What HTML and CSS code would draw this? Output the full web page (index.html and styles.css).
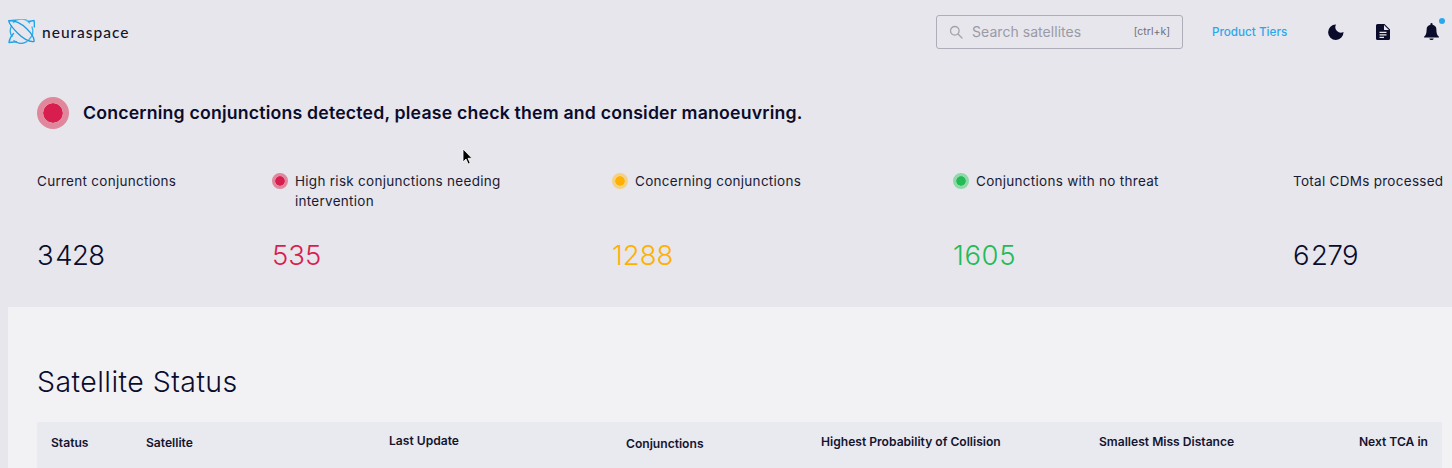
FILE: index.html
```html
<!DOCTYPE html>
<html lang="en">
<head>
<meta charset="utf-8">
<title>Neuraspace</title>
<link rel="stylesheet" href="styles.css">
</head>
<body>
<header class="topbar">
  <div class="brand">
    <svg class="logo" viewBox="0 0 27 25" fill="none" stroke-linecap="round" stroke-linejoin="round">
      <path d="M5.500 3.500A10.500 10.500 0 0 1 21.500 3.800" stroke="#4cc3f5" stroke-width="1.600"/>
      <path d="M24 8A10.500 10.500 0 0 1 21 20.500" stroke="#35b5f0" stroke-width="1.300"/>
      <path d="M3.500 7A10.500 10.500 0 0 0 4 17.500M6 21.800A10.500 10.500 0 0 0 19 22.500" stroke="#2aa5e8" stroke-width="1.300"/>
      <path d="M.8 1.800C6 .8 13.500 4.500 19 10c4.500 4.500 7.500 9.500 7 12.500-4.500.5-11-3-16.500-8.500C5 9.500 1 5 .8 1.800Z" stroke="#1f9be0" stroke-width="1.300"/>
      <path d="M.8 1.800 7.500 1.200M26 1.500c.5 2 .5 4 .3 6.500M26 1.500l-5.500 1M1 23.500c.5-3.500 2-6.500 4.500-9M1 23.500l7.500-.8" stroke="#22a4e8" stroke-width="1.400"/>
    </svg>
    <span class="brand-name">neuraspace</span>
  </div>
  <div class="search">
    <svg class="search-icon" viewBox="0 0 14 14" fill="none" stroke="#a3a3ad" stroke-width="1.300"><circle cx="5.800" cy="5.800" r="4.300"/><path d="m9 9 4 4" stroke-linecap="round"/></svg>
    <span class="search-text">Search satellites</span>
    <span class="search-key">[ctrl+k]</span>
  </div>
  <a class="tiers">Product Tiers</a>
  <svg class="tool tool-moon" viewBox="0 0 16 16"><path d="M8 .6A7.700 7.700 0 1 0 15.500 8 5.500 5.500 0 0 1 8 .6Z" fill="#0b0b2b"/></svg>
  <svg class="tool tool-doc" viewBox="0 0 14 16"><path d="M1.500 0H8.500L14 5.500V14.500A1.500 1.500 0 0 1 12.500 16H1.500A1.500 1.500 0 0 1 0 14.500V1.500A1.500 1.500 0 0 1 1.500 0ZM8 1V6H13ZM3.500 7.800V9H10.500V7.800ZM3.500 10.300V11.500H10.500V10.300ZM3.500 12.800V14H8V12.800Z" fill="#0b0b2b" fill-rule="evenodd"/></svg>
  <div class="bell">
    <svg class="tool tool-bell" viewBox="0 0 14 16"><path d="M7 0a1 1 0 0 1 1 1v.7A4.600 4.600 0 0 1 11.600 6.300c0 3.200.6 5 2.400 6.700v.7H0V13c1.800-1.700 2.400-3.500 2.400-6.700A4.600 4.600 0 0 1 6 1.700V1a1 1 0 0 1 1-1ZM5 14.500h4a2 1.500 0 0 1-4 0Z" fill="#0b0b2b"/></svg>
    <span class="bell-dot"></span>
  </div>
</header>

<section class="alert">
  <span class="dot dot-lg dot-red"></span>
  <h1 class="alert-text">Concerning conjunctions detected, please check them and consider manoeuvring.</h1>
</section>

<section class="stats">
  <div class="stat">
    <div class="stat-label">Current conjunctions</div>
    <div class="stat-value val-thousands">3&#8202;428</div>
  </div>
  <div class="stat">
    <div class="stat-label"><span class="dot dot-sm dot-red"></span><span>High risk conjunctions needing intervention</span></div>
    <div class="stat-value val-red">535</div>
  </div>
  <div class="stat">
    <div class="stat-label"><span class="dot dot-sm dot-amber"></span><span>Concerning conjunctions</span></div>
    <div class="stat-value val-amber">1288</div>
  </div>
  <div class="stat">
    <div class="stat-label"><span class="dot dot-sm dot-green"></span><span>Conjunctions with no threat</span></div>
    <div class="stat-value val-green">1605</div>
  </div>
  <div class="stat">
    <div class="stat-label">Total CDMs processed</div>
    <div class="stat-value val-thousands">6&#8202;279</div>
  </div>
</section>

<main class="panel">
  <h2 class="panel-title">Satellite Status</h2>
  <div class="table-head">
    <span class="th th-status">Status</span>
    <span class="th th-sat">Satellite</span>
    <span class="th th-update">Last Update</span>
    <span class="th th-conj">Conjunctions</span>
    <span class="th th-prob">Highest Probability of Collision</span>
    <span class="th th-miss">Smallest Miss Distance</span>
    <span class="th th-next">Next TCA in</span>
  </div>
</main>

<svg class="cursor" viewBox="0 0 11 17"><path d="M1 1v13l3-3 2.200 5 2-.9L6 10.300h4Z" fill="#000" stroke="#fff" stroke-width=".8"/></svg>
</body>
</html>
```
FILE: styles.css
```css
* { box-sizing: border-box; }
html, body { margin: 0; height: 468px; overflow: hidden; }
body {
  background: #e6e6ec;
  color: #0b0b2b;
  font-family: "Inter", "Liberation Sans", sans-serif;
  position: relative;
}
.topbar {
  display: flex;
  align-items: center;
  height: 63px;
  padding-left: 8px;
}
.brand { display: flex; align-items: center; gap: 7px; margin-right: auto; }
.logo { width: 27px; height: 25px; }
.brand-name { font: 500 15.500px "Lato", sans-serif; letter-spacing: 1px; color: #14142f; }
.search {
  display: flex;
  align-items: center;
  width: 247px;
  height: 34px;
  padding: 0 12px;
  border: 1px solid #aeaeb8;
  border-radius: 3px;
}
.search-icon { width: 14px; height: 14px; margin-right: 9px; }
.search-text { flex: 1; font-size: 14px; letter-spacing: .05px; color: #9a9aa6; }
.search-key { font-size: 10.500px; color: #70707c; }
.tiers { margin: 0 36px 0 29px; font-size: 11.700px; font-weight: 500; color: #2ba8ec; width: 80px; white-space: nowrap; }
.tool { display: block; }
.tool-moon { width: 16px; height: 16px; margin-right: 32px; }
.tool-doc { width: 14px; height: 16px; margin-right: 34px; }
.bell { position: relative; margin-right: 13px; }
.tool-bell { width: 15px; height: 17px; }
.bell-dot {
  position: absolute;
  top: -5px;
  right: -6px;
  width: 6px;
  height: 6px;
  border-radius: 50%;
  background: #2ba8ec;
}
.alert { display: flex; align-items: center; gap: 14px; height: 32px; margin: 34px 0 0 37px; }
.alert-text { margin: -2px 0 0; font-size: 17.700px; font-weight: 600; letter-spacing: .19px; color: #0b0b2b; }
.dot { display: block; flex: none; border-radius: 50%; background-clip: padding-box; }
.dot-lg { width: 32px; height: 32px; border: 6px solid #e0879c; background-color: #d81e4f; background-clip: padding-box; }
.dot-sm { width: 16px; height: 16px; border: 3px solid; margin: 2px 7px 0 0; }
.dot-red { background-color: #d81e4f; border-color: #e0879c; }
.dot-amber { background-color: #ffb000; border-color: #f5d184; }
.dot-green { background-color: #22bb55; border-color: #90d8a8; }
.stats {
  display: grid;
  grid-template-columns: 235px 340px 341px 340px 1fr;
  margin: 41px 0 0 37px;
}
.stat-label { display: flex; align-items: flex-start; height: 68px; padding-top: 1px; font-size: 13.500px; letter-spacing: .28px; line-height: 20px; color: #1a1a33; white-space: nowrap; }
.stat-label span:last-child { white-space: normal; width: 228px; }
.stat-value { height: 34px; font-size: 27.500px; line-height: 34px; font-weight: 300; color: #0b0b2b; }
.val-thousands { letter-spacing: -.5px; }
.val-red { color: #d81e4f; }
.val-amber { color: #ffb000; }
.val-green { color: #22bb55; letter-spacing: .6px; }
.panel {
  margin: 35px 0 0 8px;
  height: 161px;
  padding: 57px 10px 0 29px;
  background: #f2f2f5;
}
.panel-title { margin: 0 0 23px; height: 35px; font-size: 28.500px; line-height: 35px; font-weight: 300; letter-spacing: .45px; color: #0b0b2b; }
.table-head {
  height: 46px;
  background: #e9e9f0;
  border-radius: 2px 2px 0 0;
  display: grid;
  grid-template-columns: 95px 243px 237px 195px 278px 1fr auto;
  padding: 13px 14px 0;
  font-size: 12.100px;
  font-weight: 600;
  color: #14142f;
}
.th { white-space: nowrap; }
.th-update { margin-top: -2px; }
.th-conj { margin-top: 1px; }
.th-prob, .th-miss, .th-next { margin-top: -1px; }
.cursor { position: absolute; left: 462px; top: 148px; width: 11px; height: 17px; }
```
